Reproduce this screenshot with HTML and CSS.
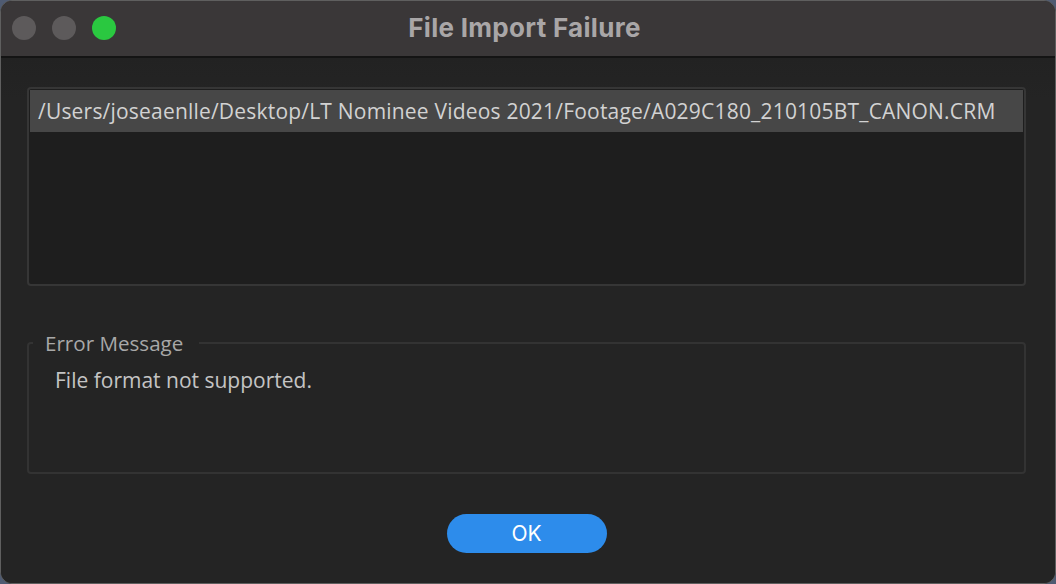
FILE: index.html
```html
<!DOCTYPE html>
<html lang="en">
<head>
<meta charset="utf-8">
<title>File Import Failure</title>
<link rel="stylesheet" href="styles.css">
</head>
<body>
<div class="window">
  <header class="titlebar">
    <div class="lights">
      <span class="light light-off"></span>
      <span class="light light-off"></span>
      <span class="light light-green"></span>
    </div>
    <h1 class="title">File Import Failure</h1>
  </header>
  <main class="content">
    <div class="filelist">
      <div class="filerow">/Users/joseaenlle/Desktop/LT Nominee Videos 2021/Footage/A029C180_210105BT_CANON.CRM</div>
    </div>
    <fieldset class="errorbox">
      <legend class="errorlegend">Error Message</legend>
      <div class="errorbody">
        <p class="errortext">File format not supported.</p>
      </div>
    </fieldset>
    <div class="actions">
      <button class="okbtn" type="button">OK</button>
    </div>
  </main>
</div>
</body>
</html>
```
FILE: styles.css
```css
html, body {
  margin: 0;
  padding: 0;
}
body {
  width: 1056px;
  height: 584px;
  background: #4f5b72;
  overflow: hidden;
  font-family: "Open Sans", "Noto Sans", sans-serif;
}
.window {
  box-sizing: border-box;
  width: 1056px;
  height: 584px;
  border: 1px solid #5f5f5f;
  border-radius: 12px;
  background: #242424;
  overflow: hidden;
  display: flex;
  flex-direction: column;
}
.titlebar {
  position: relative;
  height: 55px;
  flex: none;
  background: #3a3738;
  border-bottom: 2px solid #141414;
  display: flex;
  align-items: center;
  justify-content: center;
}
.lights {
  position: absolute;
  left: 11px;
  top: 15px;
  display: flex;
  gap: 16px;
}
.light {
  width: 24px;
  height: 24px;
  border-radius: 50%;
}
.light-off { background: #5d5a5b; }
.light-green { background: #2ac840; }
.title {
  margin: -3px 0 0 -7px;
  font-family: Inter, "Liberation Sans", sans-serif;
  font-weight: 700;
  font-size: 26px;
  letter-spacing: 0.3px;
  color: #a9a6a7;
}
.content {
  flex: 1;
  padding: 29px 29px 0 26px;
  display: flex;
  flex-direction: column;
  background: linear-gradient(#222222, #242424 40px);
}
.filelist {
  box-sizing: border-box;
  height: 199px;
  border: 2px solid #363636;
  border-radius: 4px;
  background: #1e1e1e;
  padding: 1px;
}
.filerow {
  height: 42px;
  background: #474747;
  color: #d2d2d2;
  font-size: 21px;
  letter-spacing: 0.2px;
  line-height: 42px;
  padding-left: 8px;
  white-space: nowrap;
}
.errorbox {
  margin: 43px 0 0 0;
  padding: 0;
  border: 2px solid #333333;
  border-radius: 4px;
  min-width: 0;
}
.errorlegend {
  margin-left: 4px;
  padding: 0 16px 0 12px;
  font-size: 20.6px;
  line-height: 28px;
  color: #a8a8a8;
}
.errorbody {
  height: 115px;
  box-sizing: border-box;
  padding: 9px 0 0 26px;
}
.errortext {
  margin: 0;
  font-size: 21px;
  line-height: 28px;
  color: #c4c4c4;
}
.actions {
  display: flex;
  justify-content: center;
  padding-top: 40px;
}
.okbtn {
  width: 160px;
  height: 39px;
  border: none;
  border-radius: 20px;
  background: #2d8ceb;
  color: #ffffff;
  font-family: Inter, "Liberation Sans", sans-serif;
  font-size: 21px;
  padding: 0;
}
```
